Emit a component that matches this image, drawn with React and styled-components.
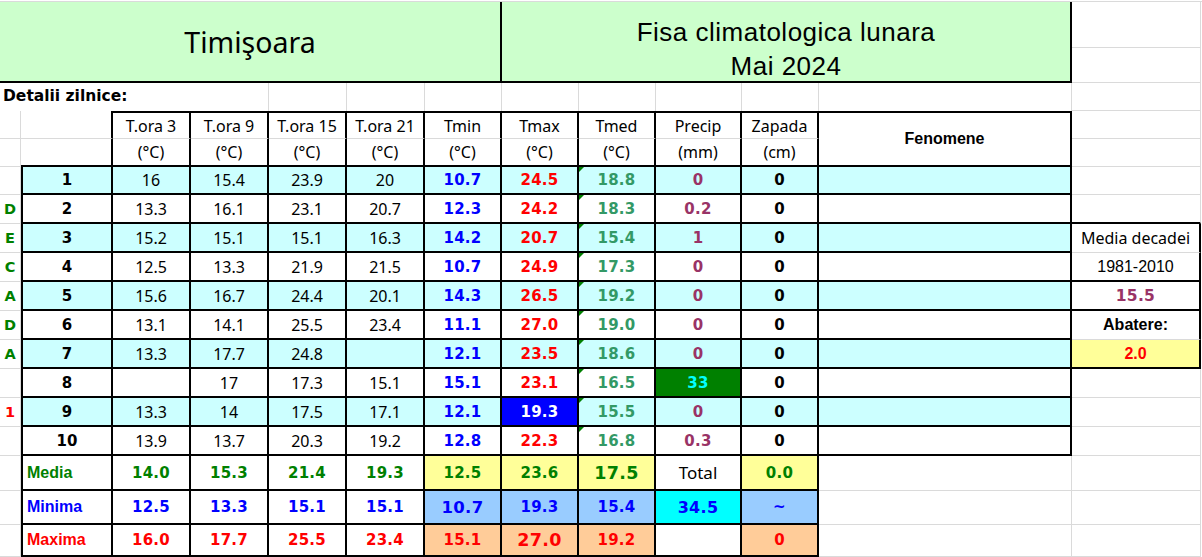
import React from 'react';
import styled, { createGlobalStyle, css } from 'styled-components';

const GRID = '#dadada';
const CYAN = '#ccffff';
const GREEN = '#008000';
const BLUE = '#0000ff';
const RED = '#ff0000';
const TEAL = '#339966';
const PLUM = '#993366';

const line = (v) => (v === 'k' ? '2px solid #000' : v === 'g' ? `1px solid ${GRID}` : 'none');

const GlobalStyle = createGlobalStyle`
  html, body { margin: 0; background: #fff; }
  body { font-family: "Noto Sans", sans-serif; overflow: hidden; }
`;

const Sheet = styled.div`
  display: grid;
  grid-template-columns: 21px 92px 78px 78px 78px 78px 77px 77px 77px 86px 77px 253px 129px;
  grid-template-rows: 46px 35px 28px 28px 28px 28px repeat(9, 29px) 35px 34px 32px;
  margin-top: 1px;
  border-top: 1px solid ${GRID};
`;

const Box = styled.div`
  box-sizing: border-box;
  display: flex;
  align-items: center;
  justify-content: center;
  min-width: 0;
  white-space: nowrap;
  background: ${(p) => p.$bg || 'transparent'};
  border-top: ${(p) => line(p.$t)};
  border-right: ${(p) => line(p.$r)};
  border-bottom: ${(p) => line(p.$b)};
  border-left: ${(p) => line(p.$l)};
`;

const Blank = styled(Box)``;

const NUM = css`
  font-family: "DejaVu Sans", "Noto Sans", sans-serif;
  font-weight: 700;
  letter-spacing: 0.3px;
`;

// title band
const CityTitle = styled(Box)`
  grid-column: span 7;
  grid-row: span 2;
  background: #ccffcc;
  border-right: 2px solid #000;
  border-bottom: 2px solid #000;
  font-family: "Noto Sans", sans-serif;
  font-size: 28.5px;
  color: #000;
`;

const ReportTitle = styled.div`
  box-sizing: border-box;
  grid-column: span 5;
  grid-row: span 2;
  display: grid;
  grid-template-rows: 46px 1fr;
  background: #ccffcc;
  border-right: 2px solid #000;
  border-bottom: 2px solid #000;
`;

const ReportLine = styled.div`
  align-self: end;
  text-align: center;
  font-family: "Liberation Sans", Arial, sans-serif;
  font-size: 26px;
  letter-spacing: 0.5px;
  line-height: 26px;
  padding-bottom: ${(p) => (p.$last ? 2 : 3)}px;
`;

const SectionLabel = styled(Box)`
  grid-column: span 3;
  justify-content: flex-start;
  padding: 0 0 2px 3px;
  font-family: "DejaVu Sans", sans-serif;
  font-weight: 700;
  font-size: 15.5px;
`;

const ColHead = styled(Box)`
  font-family: "Noto Sans", sans-serif;
  font-size: 16px;
  color: #000;
`;

const PhenHead = styled(Box)`
  grid-row: span 2;
  font-family: "Liberation Sans", Arial, sans-serif;
  font-weight: 700;
  font-size: 16px;
`;

const Letter = styled(Box)`
  font-family: "DejaVu Sans", sans-serif;
  font-weight: 700;
  font-size: 14.5px;
  color: ${(p) => p.$c};
`;

const DayNum = styled(Box)`
  ${NUM};
  font-size: 15px;
  letter-spacing: 0;
  color: #000;
`;

const Reading = styled(Box)`
  font-family: "Noto Sans", sans-serif;
  font-size: 16px;
  color: #000;
`;

const Measure = styled(Box)`
  position: relative;
  ${NUM};
  font-size: ${(p) => p.$size || 15}px;
  color: ${(p) => p.$c || '#000'};

  &::before {
    content: '';
    display: ${(p) => (p.$flag ? 'block' : 'none')};
    position: absolute;
    top: 0;
    left: 0;
    border-top: 5px solid ${GREEN};
    border-right: 5px solid transparent;
  }
`;

const StatLabel = styled(Box)`
  justify-content: flex-start;
  padding-left: 4px;
  font-family: "Liberation Sans", Arial, sans-serif;
  font-weight: 700;
  font-size: 16px;
  color: ${(p) => p.$c};
`;

const TotalLabel = styled(Box)`
  font-family: "Noto Sans", sans-serif;
  font-size: 17px;
  color: #000;
`;

const SideText = styled(Box)`
  font-family: ${(p) => (p.$comic ? '"Noto Sans", sans-serif' : '"Liberation Sans", Arial, sans-serif')};
  font-weight: ${(p) => (p.$bold ? 700 : 400)};
  font-size: 16px;
  color: ${(p) => p.$c || '#000'};
`;

const letters = [
  ['', GREEN], ['D', GREEN], ['E', GREEN], ['C', GREEN], ['A', GREEN],
  ['D', GREEN], ['A', GREEN], ['', GREEN], ['1', RED], ['', GREEN],
];

const days = [
  { t: ['16', '15.4', '23.9', '20'], min: '10.7', max: '24.5', med: '18.8', p: '0' },
  { t: ['13.3', '16.1', '23.1', '20.7'], min: '12.3', max: '24.2', med: '18.3', p: '0.2' },
  { t: ['15.2', '15.1', '15.1', '16.3'], min: '14.2', max: '20.7', med: '15.4', p: '1' },
  { t: ['12.5', '13.3', '21.9', '21.5'], min: '10.7', max: '24.9', med: '17.3', p: '0' },
  { t: ['15.6', '16.7', '24.4', '20.1'], min: '14.3', max: '26.5', med: '19.2', p: '0' },
  { t: ['13.1', '14.1', '25.5', '23.4'], min: '11.1', max: '27.0', med: '19.0', p: '0' },
  { t: ['13.3', '17.7', '24.8', ''], min: '12.1', max: '23.5', med: '18.6', p: '0' },
  { t: ['', '17', '17.3', '15.1'], min: '15.1', max: '23.1', med: '16.5', p: '33', pBg: GREEN, pC: '#00ffff' },
  { t: ['13.3', '14', '17.5', '17.1'], min: '12.1', max: '19.3', med: '15.5', p: '0', maxBg: BLUE, maxC: '#fff' },
  { t: ['13.9', '13.7', '20.3', '19.2'], min: '12.8', max: '22.3', med: '16.8', p: '0.3' },
];

const stats = [
  {
    label: 'Media', c: GREEN, t: ['14.0', '15.3', '21.4', '19.3'], bg: '#ffff99',
    ext: [['12.5'], ['23.6'], ['17.5', 17.5]],
    precip: { total: true }, snow: { v: '0.0', bg: '#ffff99' },
  },
  {
    label: 'Minima', c: BLUE, t: ['12.5', '13.3', '15.1', '15.1'], bg: '#99ccff',
    ext: [['10.7', 16.5], ['19.3'], ['15.4']],
    precip: { v: '34.5', bg: '#00ffff', size: 16 }, snow: { v: '~', bg: '#99ccff' },
  },
  {
    label: 'Maxima', c: RED, t: ['16.0', '17.7', '25.5', '23.4'], bg: '#ffcc99',
    ext: [['15.1'], ['27.0', 17.5], ['19.2']],
    precip: { v: '' }, snow: { v: '0', bg: '#ffcc99' },
  },
];

const heads = [
  ['T.ora 3', '(°C)'], ['T.ora 9', '(°C)'], ['T.ora 15', '(°C)'], ['T.ora 21', '(°C)'],
  ['Tmin', '(°C)'], ['Tmax', '(°C)'], ['Tmed', '(°C)'], ['Precip', '(mm)'], ['Zapada', '(cm)'],
];

function SideCell({ i }) {
  switch (i) {
    case 1:
      return <Blank $r="g" $b="k" />;
    case 2:
      return <SideText $comic $r="k" $b="g">Media decadei</SideText>;
    case 3:
      return <SideText $r="k" $b="k">1981-2010</SideText>;
    case 4:
      return <Measure $c={PLUM} $size={15.5} $r="k" $b="k">15.5</Measure>;
    case 5:
      return <SideText $bold $r="k" $b="g">Abatere:</SideText>;
    case 6:
      return <SideText $bold $c={RED} $bg="#ffff99" $r="k" $b="k">2.0</SideText>;
    default:
      return <Blank $r="g" $b="g" />;
  }
}

export default function App() {
  return (
    <>
      <GlobalStyle />
      <Sheet>
        <CityTitle>Timişoara</CityTitle>
        <ReportTitle>
          <ReportLine>Fisa climatologica lunara</ReportLine>
          <ReportLine $last>Mai 2024</ReportLine>
        </ReportTitle>
        <Blank $r="g" $b="g" />
        <Blank $r="g" $b="g" />

        <SectionLabel>Detalii zilnice:</SectionLabel>
        {Array.from({ length: 9 }).map((_, k) => <Blank key={k} $r="g" />)}
        <Blank $r="g" $b="g" />

        <Blank $r="g" $b="g" />
        <Blank $r="k" $b="g" />
        {heads.map(([a], k) => (
          <ColHead key={k} $t="k" $r="k" $b="g">{a}</ColHead>
        ))}
        <PhenHead $t="k" $r="k" $b="k">Fenomene</PhenHead>
        <Blank $r="g" $b="g" />

        <Blank $r="g" $b="g" />
        <Blank $r="k" $b="k" />
        {heads.map(([, u], k) => (
          <ColHead key={k} $r="k" $b="k">{u}</ColHead>
        ))}
        <Blank $r="g" $b="g" />

        {days.map((d, i) => {
          const bg = i % 2 === 0 ? CYAN : '#fff';
          return (
            <React.Fragment key={i}>
              <Letter $c={letters[i][1]} $r="g" $b="g">{letters[i][0]}</Letter>
              <DayNum $bg={bg} $l="k" $r="k" $b="k">{i + 1}</DayNum>
              {d.t.map((v, k) => (
                <Reading key={k} $bg={bg} $r="k" $b="k">{v}</Reading>
              ))}
              <Measure $c={BLUE} $bg={bg} $r="k" $b="k">{d.min}</Measure>
              <Measure $c={d.maxC || RED} $bg={d.maxBg || bg} $r="k" $b="k">{d.max}</Measure>
              <Measure $flag $c={TEAL} $bg={bg} $r="k" $b="k">{d.med}</Measure>
              <Measure $c={d.pC || PLUM} $bg={d.pBg || bg} $r="k" $b="k">{d.p}</Measure>
              <Measure $bg={bg} $r="k" $b="k">0</Measure>
              <Blank $bg={bg} $r="k" $b="k" />
              <SideCell i={i} />
            </React.Fragment>
          );
        })}

        {stats.map((s) => (
          <React.Fragment key={s.label}>
            <Blank $r="g" $b="g" />
            <StatLabel $c={s.c} $l="k" $r="k" $b="k">{s.label}</StatLabel>
            {s.t.map((v, k) => (
              <Measure key={k} $c={s.c} $r="k" $b="k">{v}</Measure>
            ))}
            {s.ext.map(([v, size], k) => (
              <Measure key={k} $c={s.c} $size={size} $bg={s.bg} $r="k" $b="k">{v}</Measure>
            ))}
            {s.precip.total ? (
              <TotalLabel $r="k" $b="k">Total</TotalLabel>
            ) : (
              <Measure $c={s.c} $size={s.precip.size} $bg={s.precip.bg} $r="k" $b="k">{s.precip.v}</Measure>
            )}
            <Measure $c={s.c} $bg={s.snow.bg} $r="k" $b="k">{s.snow.v}</Measure>
            <Blank $r="g" $b="g" />
            <Blank $r="g" $b="g" />
          </React.Fragment>
        ))}
      </Sheet>
    </>
  );
}
